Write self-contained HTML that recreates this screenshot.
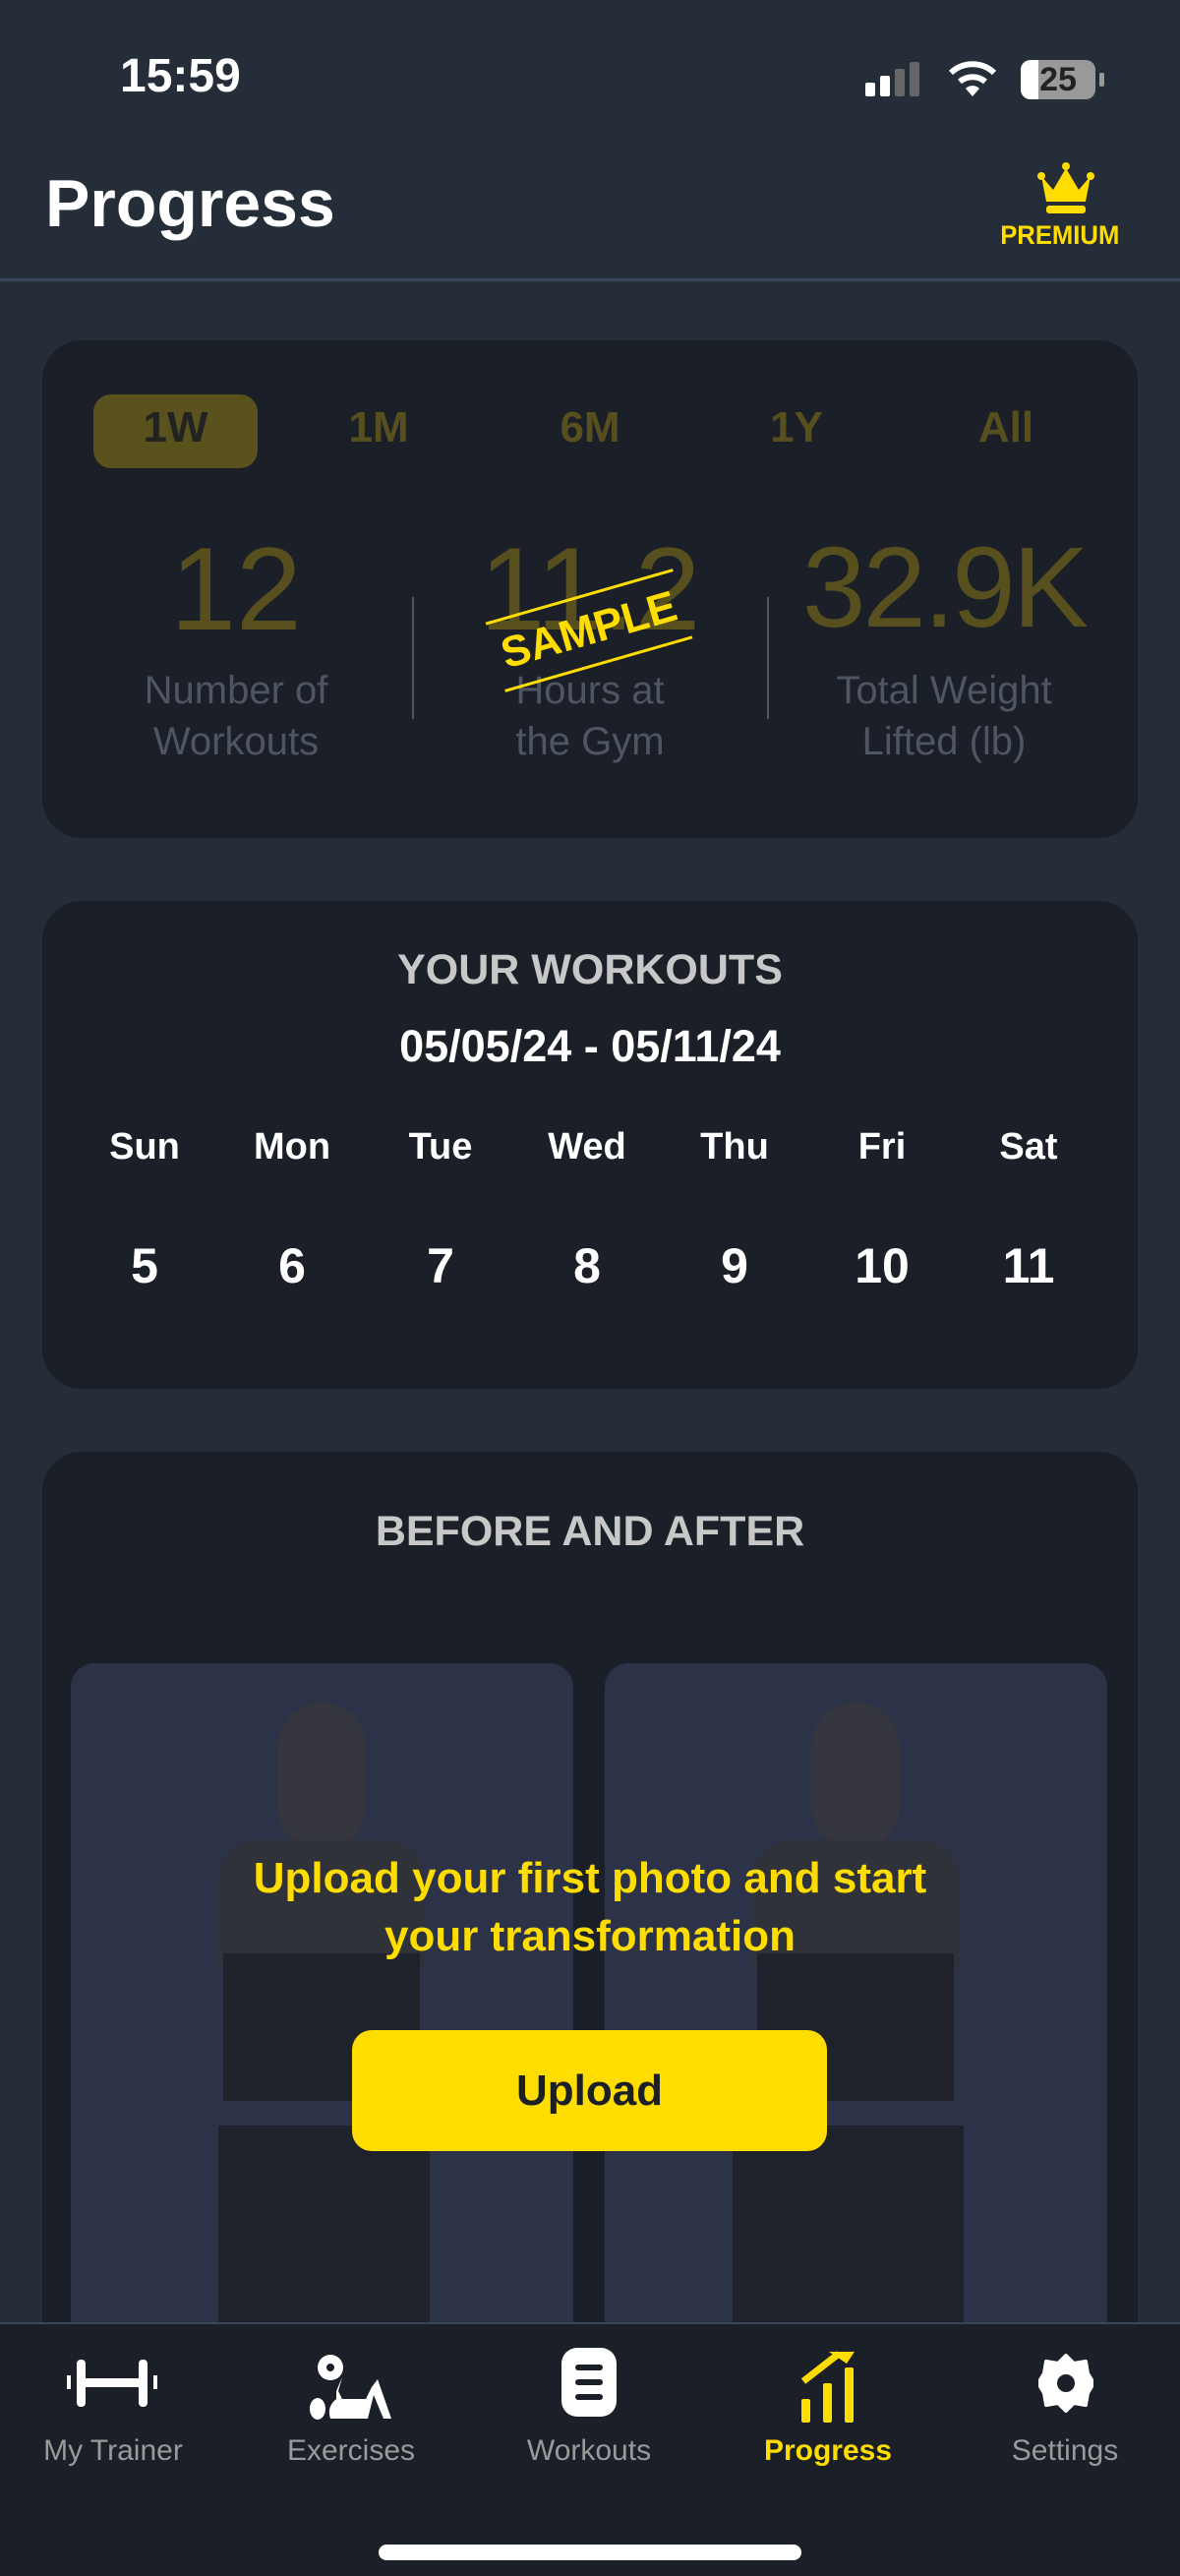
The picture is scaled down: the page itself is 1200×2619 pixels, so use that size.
<!DOCTYPE html>
<html><head><meta charset="utf-8"><style>
*{margin:0;padding:0;box-sizing:border-box}
body{width:1200px;height:2619px;background:#252d39;font-family:"Liberation Sans",sans-serif;position:relative;overflow:hidden;color:#fff}
.a{position:absolute}
.c{text-align:center}
.card{position:absolute;left:43px;width:1114px;background:#1a1f28;border-radius:40px}
</style></head><body>
<div class="a" style="left:122px;top:50px;font-size:48px;font-weight:600">15:59</div>
<svg class="a" style="left:878px;top:62px" width="62" height="38"><rect x="2" y="22" width="10" height="14" rx="2" fill="#fff"/><rect x="17" y="15" width="10" height="21" rx="2" fill="#fff"/><rect x="32" y="8" width="10" height="28" rx="2" fill="#666"/><rect x="47" y="1" width="10" height="35" rx="2" fill="#666"/></svg>
<svg class="a" style="left:963px;top:60px" width="52" height="40"><path d="M4 14 A32 32 0 0 1 48 14" stroke="#fff" stroke-width="6" fill="none"/><path d="M13 23 A20 20 0 0 1 39 23" stroke="#fff" stroke-width="6" fill="none"/><path d="M26 38 L19 30 A10 10 0 0 1 33 30 Z" fill="#fff"/></svg>
<div class="a" style="left:1038px;top:61px;width:76px;height:40px;border-radius:10px;background:#999;overflow:hidden"><div style="width:18px;height:40px;background:#fff"></div><div class="a" style="left:0;top:0;width:76px;text-align:center;font-size:34px;font-weight:700;color:#222;line-height:40px">25</div></div>
<div class="a" style="left:1118px;top:74px;width:5px;height:14px;background:#999;border-radius:2px"></div>
<div class="a" style="left:46px;top:168px;font-size:68px;font-weight:600">Progress</div>
<svg class="a" style="left:1055px;top:163px" width="58" height="58"><path d="M4 16 L16 30 L29 8 L42 30 L54 16 L49 42 L9 42 Z" fill="#ffdd00"/><circle cx="29" cy="6" r="4" fill="#ffdd00"/><circle cx="4" cy="16" r="4" fill="#ffdd00"/><circle cx="54" cy="16" r="4" fill="#ffdd00"/><rect x="9" y="46" width="40" height="8" rx="3" fill="#ffdd00"/></svg>
<div class="a" style="left:1014px;top:224px;font-size:27px;font-weight:600;color:#ffdd00;transform:scaleX(0.95)">PREMIUM</div>
<div class="a" style="left:0;top:283px;width:1200px;height:3px;background:#39465a"></div>

<div class="card" style="top:346px;height:506px"></div>
<div class="a" style="left:95px;top:401px;width:167px;height:75px;border-radius:18px;background:#5a521d"></div>
<div class="a c" style="left:95px;top:410px;width:167px;font-size:44px;color:#222;font-weight:600">1W</div>
<div class="a c" style="left:330px;top:410px;width:110px;font-size:44px;color:#57501e;font-weight:600">1M</div>
<div class="a c" style="left:545px;top:410px;width:110px;font-size:44px;color:#57501e;font-weight:600">6M</div>
<div class="a c" style="left:755px;top:410px;width:110px;font-size:44px;color:#57501e;font-weight:600">1Y</div>
<div class="a c" style="left:968px;top:410px;width:110px;font-size:44px;color:#57501e;font-weight:600">All</div>
<div class="a c" style="left:60px;top:530px;width:360px;font-size:120px;color:#57501e">12</div>
<div class="a c" style="left:420px;top:530px;width:360px;font-size:120px;color:#57501e">11.2</div>
<div class="a c" style="left:780px;top:530px;width:360px;font-size:116px;color:#57501e;letter-spacing:-3px">32.9K</div>
<div class="a c" style="left:60px;top:676px;width:360px;font-size:40px;color:#4f5562;line-height:52px">Number of<br>Workouts</div>
<div class="a c" style="left:420px;top:676px;width:360px;font-size:40px;color:#4f5562;line-height:52px">Hours at<br>the Gym</div>
<div class="a c" style="left:780px;top:676px;width:360px;font-size:40px;color:#4f5562;line-height:52px">Total Weight<br>Lifted (lb)</div>
<div class="a" style="left:419px;top:607px;width:2px;height:124px;background:#4f5562"></div>
<div class="a" style="left:780px;top:607px;width:2px;height:124px;background:#4f5562"></div>
<div class="a" style="left:500px;top:604px;width:198px;height:74px;transform:rotate(-16deg);border-top:3px solid #ffdd00;border-bottom:3px solid #ffdd00;text-align:center;font-size:44px;font-weight:700;color:#ffdd00;line-height:68px">SAMPLE</div>

<div class="card" style="top:916px;height:496px"></div>
<div class="a c" style="left:43px;top:962px;width:1114px;font-size:43px;color:#c8c8c8;font-weight:600">YOUR WORKOUTS</div>
<div class="a c" style="left:43px;top:1038px;width:1114px;font-size:45px;font-weight:600">05/05/24 - 05/11/24</div>
<div class="a" style="left:0;top:1145px;width:1200px;font-size:38px;font-weight:600">
<span class="a c" style="left:97px;width:100px">Sun</span><span class="a c" style="left:247px;width:100px">Mon</span><span class="a c" style="left:398px;width:100px">Tue</span><span class="a c" style="left:547px;width:100px">Wed</span><span class="a c" style="left:697px;width:100px">Thu</span><span class="a c" style="left:847px;width:100px">Fri</span><span class="a c" style="left:996px;width:100px">Sat</span></div>
<div class="a" style="left:0;top:1258px;width:1200px;font-size:50px;font-weight:600">
<span class="a c" style="left:97px;width:100px">5</span><span class="a c" style="left:247px;width:100px">6</span><span class="a c" style="left:398px;width:100px">7</span><span class="a c" style="left:547px;width:100px">8</span><span class="a c" style="left:697px;width:100px">9</span><span class="a c" style="left:847px;width:100px">10</span><span class="a c" style="left:996px;width:100px">11</span></div>

<div class="card" style="top:1476px;height:1000px"></div>
<div class="a c" style="left:43px;top:1533px;width:1114px;font-size:43px;color:#c8c8c8;font-weight:600">BEFORE AND AFTER</div>
<div class="a" style="left:72px;top:1691px;width:511px;height:700px;border-radius:24px;background:#2c3348;overflow:hidden">
<div class="a" style="left:210px;top:40px;width:90px;height:150px;border-radius:45px;background:#34353d"></div>
<div class="a" style="left:150px;top:180px;width:210px;height:130px;background:#30323a;border-radius:40px 40px 0 0"></div>
<div class="a" style="left:155px;top:295px;width:200px;height:150px;background:#1f222b"></div>
<div class="a" style="left:150px;top:470px;width:215px;height:240px;background:#1f222b"></div></div>
<div class="a" style="left:615px;top:1691px;width:511px;height:700px;border-radius:24px;background:#2c3348;overflow:hidden">
<div class="a" style="left:210px;top:40px;width:90px;height:150px;border-radius:45px;background:#34353d"></div>
<div class="a" style="left:150px;top:180px;width:210px;height:130px;background:#30323a;border-radius:40px 40px 0 0"></div>
<div class="a" style="left:155px;top:295px;width:200px;height:150px;background:#1f222b"></div>
<div class="a" style="left:130px;top:470px;width:235px;height:240px;background:#1f222b"></div></div>
<div class="a c" style="left:43px;top:1880px;width:1114px;font-size:44px;color:#ffdd00;font-weight:600;line-height:59px">Upload your first photo and start<br>your transformation</div>
<div class="a c" style="left:358px;top:2064px;width:483px;height:123px;border-radius:20px;background:#ffdd00;color:#1a1f28;font-size:44px;font-weight:600;line-height:123px">Upload</div>

<div class="a" style="left:0;top:2361px;width:1200px;height:258px;background:#1a1f28;border-top:2px solid #39465a"></div>
<svg class="a" style="left:66px;top:2395px" width="96" height="56"><rect x="2" y="20" width="4" height="14" fill="#fff"/><rect x="12" y="4" width="9" height="48" rx="4" fill="#fff"/><rect x="21" y="23" width="54" height="9" fill="#fff"/><rect x="75" y="4" width="9" height="48" rx="4" fill="#fff"/><rect x="90" y="20" width="4" height="14" fill="#fff"/></svg>
<svg class="a" style="left:314px;top:2387px" width="86" height="74"><circle cx="22" cy="20" r="13" fill="#fff"/><circle cx="22" cy="20" r="4" fill="#1a1f28"/><ellipse cx="9" cy="62" rx="8" ry="11" fill="#fff"/><path d="M34 30 L30 44 L34 52 L58 52 L64 40 L70 32 L84 72 L76 72 L66 48 L60 72 L22 72 Q18 60 28 52 L28 44 Z" fill="#fff"/></svg>
<div class="a" style="left:571px;top:2387px;width:56px;height:70px;border-radius:16px;background:#fff"><div class="a" style="left:14px;top:17px;width:28px;height:6px;background:#1a1f28;border-radius:3px"></div><div class="a" style="left:14px;top:32px;width:28px;height:6px;background:#1a1f28;border-radius:3px"></div><div class="a" style="left:14px;top:47px;width:28px;height:6px;background:#1a1f28;border-radius:3px"></div></div>
<svg class="a" style="left:813px;top:2389px" width="60" height="74"><path d="M4 32 L40 4" stroke="#ffdd00" stroke-width="7"/><path d="M30 2 L56 2 L48 14 Z" fill="#ffdd00"/><rect x="2" y="50" width="9" height="24" rx="2" fill="#ffdd00"/><rect x="24" y="34" width="9" height="40" rx="2" fill="#ffdd00"/><rect x="46" y="18" width="9" height="56" rx="2" fill="#ffdd00"/></svg>
<svg class="a" style="left:1056px;top:2393px" width="56" height="60"><path d="M28 2 L36 10 L48 8 L50 20 L56 30 L50 40 L48 52 L36 50 L28 58 L20 50 L8 52 L6 40 L0 30 L6 20 L8 8 L20 10 Z" fill="#fff" stroke="#fff" stroke-width="4" stroke-linejoin="round"/><circle cx="28" cy="30" r="9" fill="#1a1f28"/></svg>
<div class="a" style="left:0;top:2475px;width:1200px;font-size:30px;color:#9a9a9a">
<span class="a c" style="left:15px;width:200px">My Trainer</span><span class="a c" style="left:257px;width:200px">Exercises</span><span class="a c" style="left:499px;width:200px">Workouts</span><span class="a c" style="left:742px;width:200px;color:#ffdd00;font-weight:600">Progress</span><span class="a c" style="left:983px;width:200px">Settings</span></div>
<div class="a" style="left:385px;top:2587px;width:430px;height:16px;border-radius:8px;background:#fff"></div>
</body></html>
